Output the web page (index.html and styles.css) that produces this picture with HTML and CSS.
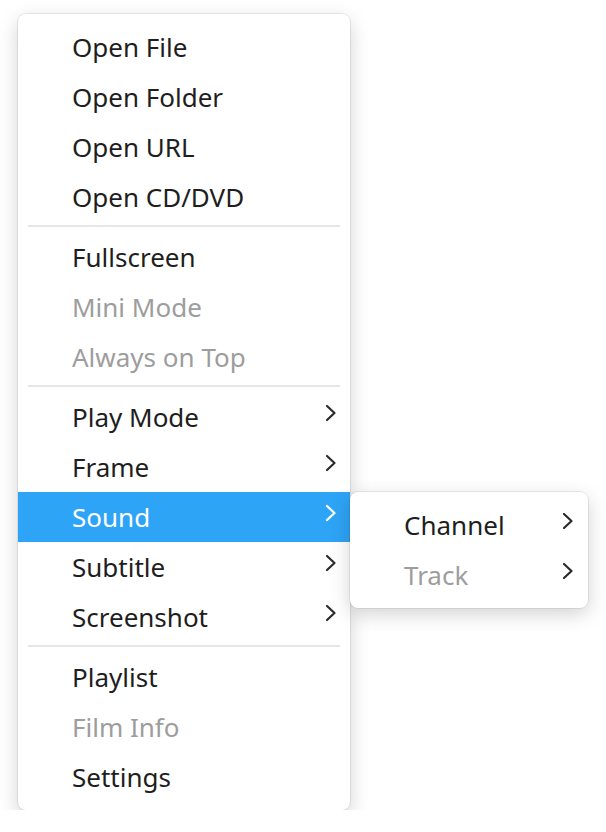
FILE: index.html
```html
<!DOCTYPE html>
<html>
<head>
<meta charset="utf-8">
<link rel="stylesheet" href="styles.css">
</head>
<body>
<div class="menu main">
  <div class="item">Open File</div>
  <div class="item">Open Folder</div>
  <div class="item">Open URL</div>
  <div class="item">Open CD/DVD</div>
  <div class="sep"></div>
  <div class="item">Fullscreen</div>
  <div class="item disabled">Mini Mode</div>
  <div class="item disabled">Always on Top</div>
  <div class="sep"></div>
  <div class="item sub">Play Mode<svg class="chev" width="12" height="18" viewBox="0 0 12 18"><path d="M2 2 L9.5 9 L2 16"/></svg></div>
  <div class="item sub">Frame<svg class="chev" width="12" height="18" viewBox="0 0 12 18"><path d="M2 2 L9.5 9 L2 16"/></svg></div>
  <div class="item sub active">Sound<svg class="chev" width="12" height="18" viewBox="0 0 12 18"><path d="M2 2 L9.5 9 L2 16"/></svg>
    <div class="menu submenu">
      <div class="item sub">Channel<svg class="chev" width="12" height="18" viewBox="0 0 12 18"><path d="M2 2 L9.5 9 L2 16"/></svg></div>
      <div class="item sub disabled">Track<svg class="chev" width="12" height="18" viewBox="0 0 12 18"><path d="M2 2 L9.5 9 L2 16"/></svg></div>
    </div>
  </div>
  <div class="item sub">Subtitle<svg class="chev" width="12" height="18" viewBox="0 0 12 18"><path d="M2 2 L9.5 9 L2 16"/></svg></div>
  <div class="item sub">Screenshot<svg class="chev" width="12" height="18" viewBox="0 0 12 18"><path d="M2 2 L9.5 9 L2 16"/></svg></div>
  <div class="sep"></div>
  <div class="item">Playlist</div>
  <div class="item disabled">Film Info</div>
  <div class="item">Settings</div>
</div>
</body>
</html>
```
FILE: styles.css
```css
html, body {
  margin: 0;
  background: #ffffff;
}
body {
  padding: 14px 0 0 18px;
  font-family: "Noto Sans", "Open Sans", sans-serif;
}
.menu {
  background: #ffffff;
  border-radius: 8px;
  box-shadow: 0 0 0 1px rgba(0, 0, 0, 0.07), 0 6px 20px rgba(0, 0, 0, 0.18);
  padding: 8px 0;
}
.main {
  width: 332px;
  box-sizing: border-box;
}
.item {
  position: relative;
  height: 50px;
  display: flex;
  align-items: center;
  padding-left: 54px;
  font-size: 26px;
  color: #1e1e1e;
  line-height: 1;
}
.item.disabled {
  color: #9d9d9d;
}
.item.active {
  background: #2ea4f6;
  color: #ffffff;
}
.chev {
  position: absolute;
  right: 13px;
  top: 12px;
  fill: none;
  stroke: #2a2a2a;
  stroke-width: 2.2;
  stroke-linecap: round;
  stroke-linejoin: round;
}
.item.active > .chev {
  stroke: #ffffff;
}
.sep {
  height: 2px;
  margin: 3px 10px 5px;
  background: #e6e6e6;
}
.submenu {
  position: absolute;
  left: 100%;
  top: 0;
  width: 238px;
  box-sizing: border-box;
  z-index: 2;
}
.submenu .item {
  color: #1e1e1e;
}
.submenu .item.disabled {
  color: #9d9d9d;
}
.submenu .chev {
  right: 14px;
}
```
